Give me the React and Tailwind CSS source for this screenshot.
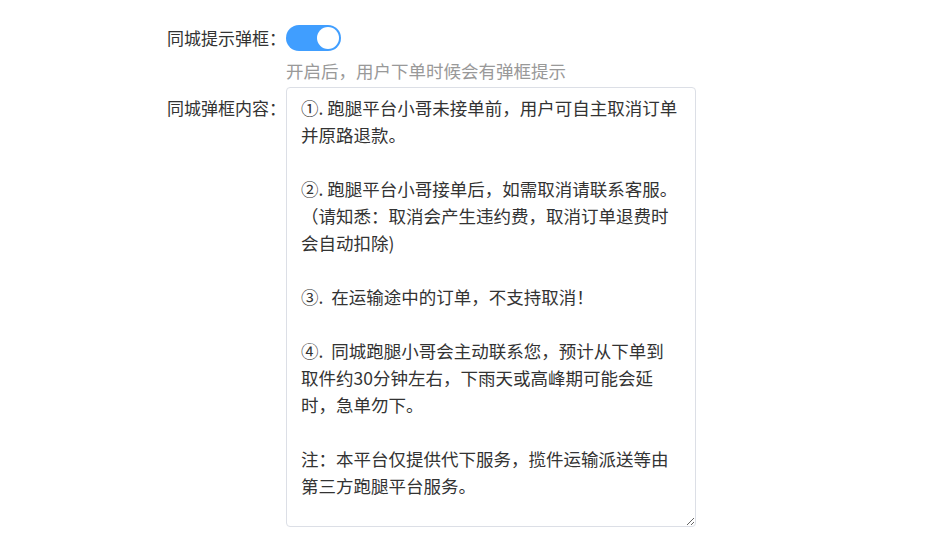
import { useState } from 'react';

const notice = `①. 跑腿平台小哥未接单前，用户可自主取消订单并原路退款。

②. 跑腿平台小哥接单后，如需取消请联系客服。（请知悉：取消会产生违约费，取消订单退费时会自动扣除)

③.  在运输途中的订单，不支持取消！

④.  同城跑腿小哥会主动联系您，预计从下单到取件约30分钟左右，下雨天或高峰期可能会延时，急单勿下。

注：本平台仅提供代下服务，揽件运输派送等由第三方跑腿平台服务。`;

function Switch({ on, onChange }) {
  return (
    <button
      type="button"
      onClick={() => onChange(!on)}
      className={`relative w-[55px] h-[26px] rounded-full transition-colors ${on ? 'bg-[#409eff]' : 'bg-[#dcdfe6]'}`}
    >
      <span
        className={`absolute top-[2px] w-[22px] h-[22px] rounded-full bg-white transition-all ${on ? 'left-[31px]' : 'left-[2px]'}`}
      />
    </button>
  );
}

function App() {
  const [enabled, setEnabled] = useState(true);

  return (
    <div className="min-h-screen bg-white pt-[25px] text-[17.5px] text-[#333] font-['Noto_Sans_CJK_SC','Noto_Sans',sans-serif]">
      <div className="flex items-center">
        <label className="w-[286px] shrink-0 text-right text-[17px] leading-[26px]">同城提示弹框：</label>
        <Switch on={enabled} onChange={setEnabled} />
      </div>
      <div className="pl-[286px] mt-[8px] leading-[24px] text-[#999]">开启后，用户下单时候会有弹框提示</div>
      <div className="flex items-start mt-[4px]">
        <label className="w-[286px] shrink-0 text-right text-[17px] pt-[7px] leading-[27px]">同城弹框内容：</label>
        <textarea
          defaultValue={notice}
          className="w-[410px] h-[440px] border border-[#dcdfe6] rounded-[4px] pl-[14px] pr-[16px] py-[6px] text-[17.5px] leading-[27px] text-[#333] outline-none resize-y font-['Noto_Sans_CJK_SC','Noto_Sans',sans-serif]"
        />
      </div>
    </div>
  );
}

export default App;
